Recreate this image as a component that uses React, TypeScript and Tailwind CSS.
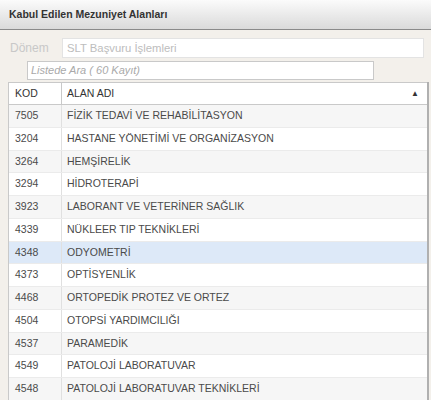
import React from 'react';

const rows = [
  { kod: '7505', ad: 'FİZİK TEDAVİ VE REHABİLİTASYON' },
  { kod: '3204', ad: 'HASTANE YÖNETİMİ VE ORGANİZASYON' },
  { kod: '3264', ad: 'HEMŞİRELİK' },
  { kod: '3294', ad: 'HİDROTERAPİ' },
  { kod: '3923', ad: 'LABORANT VE VETERİNER SAĞLIK' },
  { kod: '4339', ad: 'NÜKLEER TIP TEKNİKLERİ' },
  { kod: '4348', ad: 'ODYOMETRİ' },
  { kod: '4373', ad: 'OPTİSYENLİK' },
  { kod: '4468', ad: 'ORTOPEDİK PROTEZ VE ORTEZ' },
  { kod: '4504', ad: 'OTOPSİ YARDIMCILIĞI' },
  { kod: '4537', ad: 'PARAMEDİK' },
  { kod: '4549', ad: 'PATOLOJİ LABORATUVAR' },
  { kod: '4548', ad: 'PATOLOJİ LABORATUVAR TEKNİKLERİ' },
];

const App = () => {
  const selected = '4348';

  return (
    <div className="w-[431px] h-[400px] overflow-hidden bg-[#f3f0eb] font-['Liberation_Sans',Arial,sans-serif]">
      {/* Başlık */}
      <div className="h-[30px] flex items-center px-[9px] bg-gradient-to-b from-[#fbfbfb] to-[#dadada] border-b border-[#8a8a8a]">
        <span className="text-[10.5px] font-bold text-[#333]">Kabul Edilen Mezuniyet Alanları</span>
      </div>

      {/* Filtreler */}
      <div className="pt-[8px] pl-[10px] pr-[7px]">
        <div className="flex items-center h-[20px]">
          <span className="w-[52px] text-[12px] text-[#c8c8c8]">Dönem</span>
          <div className="flex-1 h-[20px] bg-white border border-[#e3e3e3] flex items-center px-[4px] text-[11.3px] text-[#bdbdbd]">
            SLT Başvuru İşlemleri
          </div>
        </div>
        <div className="mt-[3px] ml-[17px] w-[347px] h-[19px] bg-white border border-[#c9c9c9] flex items-center px-[3px] text-[11px] italic text-[#a9a9a9]">
          Listede Ara ( 60 Kayıt)
        </div>
      </div>

      {/* Tablo */}
      <div className="mt-[2px] ml-[8px] w-[421px] bg-white border-l border-[#c9c9c9] border-r-2 border-r-[#b0b0b0]">
        <div className="flex h-[23px] border-t border-b border-[#c9c9c9] text-[10.5px] text-[#333]">
          <div className="w-[53px] flex items-center pl-[6px] border-r border-[#c9c9c9]">KOD</div>
          <div className="flex-1 flex items-center justify-between pl-[5px] pr-[8px]">
            <span>ALAN ADI</span>
            <span className="text-[8px] text-[#333]">▲</span>
          </div>
        </div>
        {rows.map((r, i) => (
          <div
            key={r.kod}
            className={`flex h-[22.75px] border-b border-[#ebebeb] text-[10.5px] text-[#4a4a4a] ${
              r.kod === selected ? 'bg-[#dde9f8]' : i % 2 === 0 ? 'bg-[#f6f6f6]' : 'bg-white'
            }`}
          >
            <div className="w-[53px] flex items-center pl-[6px] border-r border-[#e0e0e0]">{r.kod}</div>
            <div className="flex-1 flex items-center pl-[5px]">{r.ad}</div>
          </div>
        ))}
      </div>
    </div>
  );
};

export default App;
